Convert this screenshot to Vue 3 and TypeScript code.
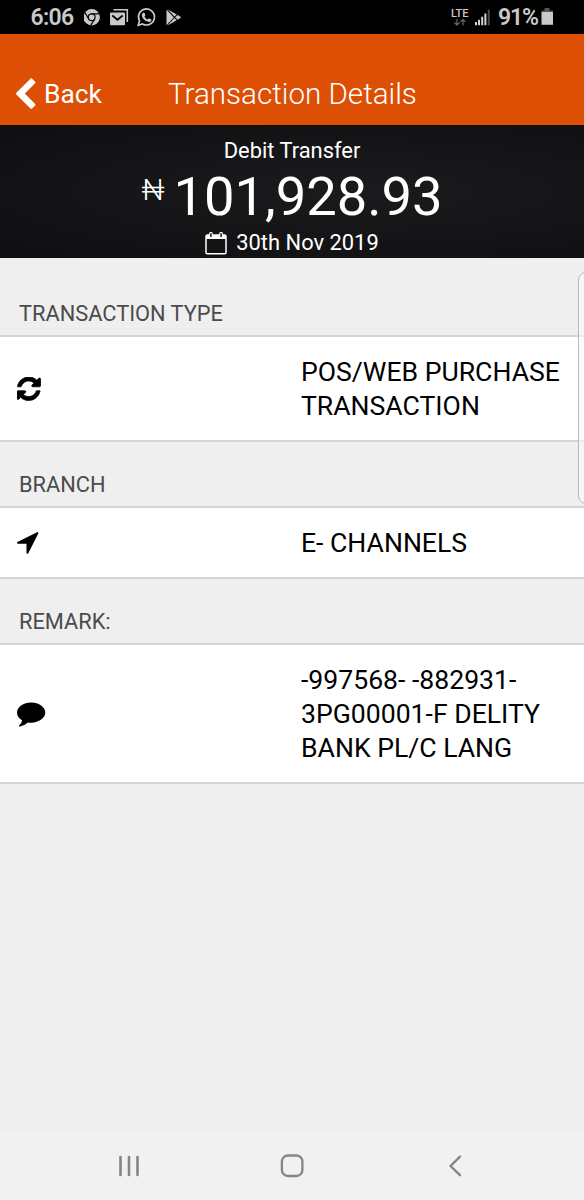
<script setup lang="ts">
interface Section {
  label: string
  icon: 'refresh' | 'location' | 'comment'
  lines: string[]
}

const sections: Section[] = [
  { label: 'TRANSACTION TYPE', icon: 'refresh', lines: ['POS/WEB PURCHASE', 'TRANSACTION'] },
  { label: 'BRANCH', icon: 'location', lines: ['E- CHANNELS'] },
  { label: 'REMARK:', icon: 'comment', lines: ['-997568- -882931-', '3PG00001-F DELITY', 'BANK PL/C LANG'] },
]
</script>

<template>
  <div class="screen">
    <div class="status">
      <span class="clock">6:06</span>
      <svg class="tray" width="100" height="34" viewBox="84 0 100 34">
        <circle cx="91.7" cy="17.3" r="8.2" fill="#c9c9c9" />
        <g fill="none" stroke="#050505" stroke-width="1.2">
          <circle cx="91.7" cy="17.3" r="3.4" />
          <path d="M91.7 13.9h7.5M88.8 19l-3.9-6.4M94.6 19l-3.8 6.4" />
        </g>
        <path d="M113.500 9.800H127.300V22" fill="none" stroke="#c9c9c9" stroke-width="1.600" />
        <rect x="110" y="12.500" width="15" height="12.800" rx="1" fill="#c9c9c9" />
        <path d="M112.300 15.500l5.200 4.300 5.200-4.300" fill="none" stroke="#050505" stroke-width="1.800" />
        <path d="M138.200 25.300l1.300-4.400a8 8 0 1 1 3 3z" fill="none" stroke="#c9c9c9" stroke-width="1.700" />
        <path d="M142.800 13.100c.5-.6 1.500-.6 1.800.1l.8 1.800c.1.400-.7 1.200-.9 1.500.8 1.500 1.900 2.500 3.300 3.100l1.200-1.300 2.200 1.100c.6.500-.1 1.900-.9 2.400-2.200 1.300-8.800-2.800-8.500-6.700 0-.8.500-1.500 1-2z" fill="#c9c9c9" />
        <path d="M166.500 9.500v15.800l7.300-7.900zM167.500 9.300l6.900 7.300 2.300-2.100zM167.500 25.500l6.900-7.500 2.300 2.200zM175.100 17.300l2.500-2.300 3.700 2.300-3.700 2.400z" fill="#c9c9c9" />
      </svg>
      <svg class="network" width="46" height="34" viewBox="448 0 46 34">
        <text x="451" y="16.500" class="lte" textLength="17.500">LTE</text>
        <g stroke="#626262" stroke-width="1.300" fill="none">
          <path d="M457 19v6M454.500 22.500l2.500 2.600 2.500-2.600M463 25.500v-6M460.500 22l2.500-2.600 2.500 2.600" />
        </g>
        <path d="M475 22h2v3.300h-2zM478 19.800h2v5.500h-2zM481.200 16.800h2v8.500h-2zM484.400 13.500h2v11.800h-2z" fill="#d0d0d0" />
        <path d="M487.800 9.500h2v15.800h-2z" fill="#484848" />
      </svg>
      <span class="percent">91%</span>
      <svg class="battery" width="13" height="18" viewBox="0 0 13 18">
        <path d="M3.500 0h5v3h-5z" fill="#555" />
        <path d="M.5 2.500h11.500v1.800H.5z" fill="#555" />
        <path d="M.5 4h11.500v12.800H.5z" fill="#c9c9c9" />
      </svg>
    </div>

    <header class="header">
      <svg class="chevron" width="20" height="32" viewBox="0 0 20 32">
        <path d="M.6 14.500L14.500.7q.8-.8 1.600 0l3 3q.8.800 0 1.600L8.800 15.600 19.100 25.900q.8.800 0 1.600l-3 3q-.8.800-1.600 0L.6 16.700q-1.100-1.100 0-2.200z" fill="#fff" />
      </svg>
      <span class="back">Back</span>
      <h1 class="title">Transaction Details</h1>
    </header>

    <section class="summary">
      <div class="kind">Debit Transfer</div>
      <div class="amount"><span class="naira">₦</span><span class="value">101,928.93</span></div>
      <div class="date">
        <svg width="22" height="23" viewBox="0 0 22 23">
          <path d="M2.500 3h17q1.500 0 1.500 1.500v16q0 1.300-1.500 1.300h-17q-1.500 0-1.500-1.300v-16Q1 3 2.500 3z" fill="none" stroke="#fff" stroke-width="1.500" />
          <path d="M1 3h20v4H1z" fill="#fff" />
          <path d="M4.600 1.500q0-1 1.300-1t1.300 1v4H4.600zM14.800 1.500q0-1 1.300-1t1.300 1v4h-2.600z" fill="#17171a" stroke="#fff" stroke-width="1.100" />
        </svg>
        <span>30th Nov 2019</span>
      </div>
    </section>

    <main class="content">
      <template v-for="s in sections" :key="s.label">
        <h2 class="label">{{ s.label }}</h2>
        <div class="row">
          <svg v-if="s.icon === 'refresh'" class="icon" width="23.500" height="23.500" viewBox="0 128 1536 1536">
            <path d="M1511 1056q0 5-1 7-64 268-268 434.500t-478 166.500q-146 0-282.500-55t-243.500-157l-129 129q-19 19-45 19t-45-19-19-45v-448q0-26 19-45t45-19h448q26 0 45 19t19 45-19 45l-137 137q71 66 161 102t187 36q134 0 250-65t186-179q11-17 53-117 8-23 30-23h192q13 0 22.500 9.500t9.500 22.500zm25-800v448q0 26-19 45t-45 19h-448q-26 0-45-19t-19-45 19-45l138-138q-148-137-349-137-134 0-250 65t-186 179q-11 17-53 117-8 23-30 23h-199q-13 0-22.500-9.500t-9.500-22.500v-7q65-268 270-434.500t480-166.500q146 0 284 55.500t245 156.500l130-129q19-19 45-19t45 19 19 45z" stroke="#000" stroke-width="50" />
          </svg>
          <svg v-else-if="s.icon === 'location'" class="icon" width="22" height="22" viewBox="0 0 22 22">
            <path d="M20.800.200q.900.500.500 1.300L11.300 21.200q-.4.700-1.100.500t-.7-.9v-9.100H.900q-.700 0-.9-.700t.500-1.100L20 .200q.400-.200.800 0z" />
          </svg>
          <svg v-else class="icon comment" width="29" height="26" viewBox="0 0 29 26">
            <path d="M14.200.500C22 .500 28.300 5.100 28.300 10.600S22 20.700 14.200 20.700q-1.600 0-3.200-.2-3.300 2.900-8 4.100-.8.200-1-.3t.4-1q2.300-2.100 2.700-5Q0 15.400 0 10.600C0 5.100 6.400.500 14.200.500z" />
          </svg>
          <div class="text">
            <div v-for="line in s.lines" :key="line">{{ line }}</div>
          </div>
        </div>
      </template>
    </main>

    <nav class="nav">
      <svg width="22" height="24" viewBox="0 0 22 24" fill="none" stroke="#858585" stroke-width="2.600" stroke-linecap="round">
        <path d="M2.500 3v18M11 3v18M19.500 3v18" />
      </svg>
      <svg width="24" height="24" viewBox="0 0 24 24" fill="none" stroke="#858585" stroke-width="2.300">
        <rect x="1.900" y="1.500" width="20.500" height="20.500" rx="6" />
      </svg>
      <svg width="22" height="24" viewBox="0 0 22 24" fill="none" stroke="#858585" stroke-width="2.400" stroke-linecap="round" stroke-linejoin="round">
        <path d="M16 2.700L6.500 12l9.500 9.200" />
      </svg>
    </nav>
    <div class="edge-panel"></div>
  </div>
</template>

<style>
body {
  margin: 0;
}
</style>

<style scoped>
.screen {
  position: relative;
  display: flex;
  flex-direction: column;
  width: 584px;
  height: 1200px;
  overflow: hidden;
  background: #efefef;
  color: #000;
  font-family: Roboto, "Noto Sans", sans-serif;
}
.status {
  display: flex;
  align-items: center;
  height: 34px;
  background: #000;
  color: #c9c9c9;
  white-space: nowrap;
}
.clock {
  width: 53.5px;
  padding-left: 30.5px;
  font-size: 23px;
  font-weight: 600;
  letter-spacing: -0.7px;
}
.network {
  margin-left: auto;
}
.lte {
  font-size: 11px;
  font-weight: 500;
  fill: #c9c9c9;
}
.percent {
  width: 43px;
  padding-left: 4px;
  font-size: 23px;
  font-weight: 600;
  letter-spacing: -1.2px;
}
.battery {
  margin: 0 30px 0 0;
}
.header {
  display: flex;
  align-items: center;
  height: 91px;
  box-sizing: border-box;
  padding: 29px 0 0 16px;
  background: #dd4f05;
  color: #fff;
}
.back {
  width: 124px;
  margin-left: 8px;
  font-size: 26.4px;
}
.title {
  margin: 0;
  font-size: 29.6px;
  font-weight: 300;
  line-height: 34px;
  padding-bottom: 1px;
  white-space: nowrap;
}
.summary {
  display: flex;
  flex-direction: column;
  align-items: center;
  height: 133px;
  background: radial-gradient(ellipse at 60% 50%, #1b1b1d, #101012 90%);
  color: #fff;
  white-space: nowrap;
}
.kind {
  padding-top: 12px;
  font-size: 21.9px;
  line-height: 27px;
}
.amount {
  display: flex;
  align-items: flex-start;
  gap: 9px;
  height: 65px;
  font-size: 54.3px;
  line-height: 65px;
}
.naira {
  font-size: 30px;
  font-weight: 300;
  line-height: 51px;
}
.date {
  display: flex;
  align-items: center;
  gap: 9px;
  font-size: 21.9px;
  line-height: 28px;
}
.label {
  display: flex;
  align-items: flex-end;
  box-sizing: border-box;
  height: 64px;
  margin: 0;
  padding: 0 0 8px 19px;
  color: #4b4b4b;
  font-size: 21.8px;
  font-weight: 400;
  line-height: 26px;
}
.label:first-child {
  height: 77px;
}
.row {
  display: flex;
  align-items: center;
  box-sizing: border-box;
  padding: 18px 0 17px 17px;
  border: solid #d4d4d4;
  border-width: 2px 0;
  background: #fff;
}
.icon {
  flex: none;
}
.comment {
  margin-top: 2px;
}
.text {
  width: 283px;
  margin-left: auto;
  font-size: 26.6px;
  line-height: 34px;
  white-space: nowrap;
}
.nav {
  display: flex;
  align-items: center;
  justify-content: space-between;
  box-sizing: border-box;
  height: 68px;
  margin-top: auto;
  padding: 0 118px;
  background: #f1f1f1;
}
.edge-panel {
  position: absolute;
  top: 272px;
  right: -12px;
  width: 16px;
  height: 230px;
  border: 1px solid #b8b8b8;
  border-radius: 8px;
  background: rgba(250, 250, 250, 0.6);
}
</style>
